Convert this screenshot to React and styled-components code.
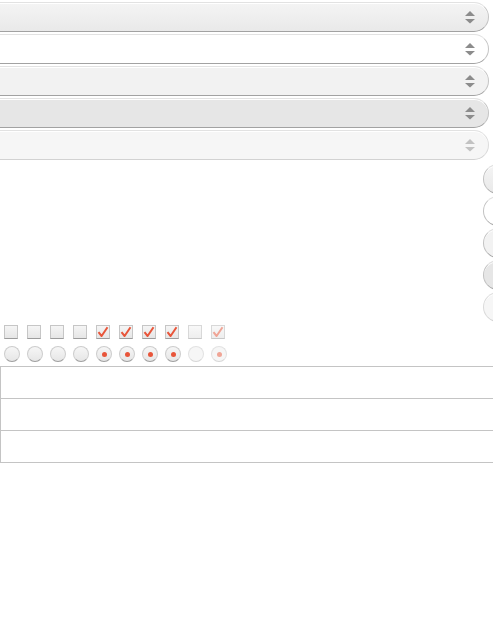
import React from "react"
import styled, { createGlobalStyle, css } from "styled-components"

const GlobalStyle = createGlobalStyle`
  html, body {
    margin: 0;
    padding: 0;
    background: #ffffff;
    overflow: hidden;
    font-family: "Liberation Sans", Arial, sans-serif;
  }
`

const fills = {
  normal: css`
    background: linear-gradient(#f4f4f4, #e9e9e9);
  `,
  focus: css`
    background: #ffffff;
  `,
  hover: css`
    background: #f2f2f2;
  `,
  active: css`
    background: #e6e6e6;
  `,
  disabled: css`
    background: #f6f6f6;
  `
}

const Page = styled.div`
  width: 493px;
  padding-top: 2px;
`

const SelectList = styled.div`
  display: flex;
  flex-direction: column;
  gap: 2px;
`

const SelectBar = styled.div`
  box-sizing: border-box;
  width: 489px;
  height: 30px;
  display: flex;
  align-items: center;
  justify-content: flex-end;
  padding-right: 13px;
  border: 1px solid #e2e2e2;
  border-left: none;
  border-bottom-color: ${(p) => (p.$state === "disabled" ? "#d2d2d2" : "#a2a2a2")};
  border-right-color: ${(p) => (p.$state === "disabled" ? "#dcdcdc" : "#c4c4c4")};
  border-radius: 0 15px 15px 0;
  box-shadow: inset 0 1px 0 #ffffff;
  ${(p) => fills[p.$state]}
`

const ButtonColumn = styled.div`
  display: flex;
  flex-direction: column;
  align-items: flex-start;
  gap: 2px;
  margin-top: 4px;
  padding-left: 483px;
`

const RoundButton = styled.div`
  box-sizing: border-box;
  width: 60px;
  height: 30px;
  border: 1px solid #e0e0e0;
  border-bottom-color: ${(p) => (p.$state === "disabled" ? "#d2d2d2" : "#a8a8a8")};
  border-left-color: ${(p) => (p.$state === "disabled" ? "#dadada" : "#c2c2c2")};
  border-radius: 15px;
  box-shadow: inset 0 1px 0 #ffffff;
  ${(p) => fills[p.$state]}
`

const ControlRow = styled.div`
  display: flex;
  align-items: center;
  padding-left: ${(p) => p.$pad}px;
  gap: ${(p) => p.$gap}px;
  height: ${(p) => p.$h}px;
`

const Box = styled.div`
  box-sizing: border-box;
  width: 14px;
  height: 14px;
  display: flex;
  align-items: center;
  justify-content: center;
  border: 1px solid ${(p) => (p.$disabled ? "#d8d8d8" : "#c6c6c6")};
  border-bottom-color: ${(p) => (p.$disabled ? "#c8c8c8" : "#9c9c9c")};
  background: ${(p) =>
    p.$disabled ? "linear-gradient(#f8f8f8, #eeeeee)" : "linear-gradient(#f5f5f5, #e6e6e6)"};
`

const Radio = styled.div`
  box-sizing: border-box;
  width: 16px;
  height: 16px;
  border-radius: 50%;
  display: flex;
  align-items: center;
  justify-content: center;
  border: 1px solid ${(p) => (p.$disabled ? "#e2e2e2" : "#cdcdcd")};
  border-bottom-color: ${(p) => (p.$disabled ? "#d6d6d6" : "#9e9e9e")};
  background: ${(p) =>
    p.$disabled ? "#f6f6f6" : "linear-gradient(#f6f6f6, #e6e6e6)"};
`

const Dot = styled.span`
  width: 5px;
  height: 5px;
  border-radius: 50%;
  background: ${(p) => (p.$disabled ? "#f0a596" : "#e8553a")};
`

const Table = styled.div`
  width: 520px;
  border-top: 1px solid #c4c4c4;
`

const TableRow = styled.div`
  height: 31px;
  border-left: 1px solid #c4c4c4;
  border-bottom: 1px solid #c4c4c4;
`

function Arrows({ disabled }) {
  const c = disabled ? "#c2c2c2" : "#8c8c8c"
  return (
    <svg width="10" height="13" viewBox="0 0 10 13">
      <path d="M5 0 L10 5 L0 5 Z" fill={c} />
      <path d="M0 8 L10 8 L5 12.5 Z" fill={c} />
    </svg>
  )
}

function Check({ disabled }) {
  return (
    <svg width="12" height="12" viewBox="0 0 12 12">
      <path
        d="M1.5 6.2 L4.6 10 L10.5 1.2"
        fill="none"
        stroke={disabled ? "#f0a596" : "#e8553a"}
        strokeWidth="2"
        strokeLinejoin="round"
      />
    </svg>
  )
}

const states = ["normal", "focus", "hover", "active", "disabled"]
const checks = [
  { on: false }, { on: false }, { on: false }, { on: false },
  { on: true }, { on: true }, { on: true }, { on: true },
  { on: false, disabled: true }, { on: true, disabled: true }
]

export default function App() {
  return (
    <Page>
      <GlobalStyle />
      <SelectList>
        {states.map((s) => (
          <SelectBar key={s} $state={s}>
            <Arrows disabled={s === "disabled"} />
          </SelectBar>
        ))}
      </SelectList>
      <ButtonColumn>
        {states.map((s) => (
          <RoundButton key={s} $state={s} />
        ))}
      </ButtonColumn>
      <ControlRow $pad={4} $gap={9} $h={20}>
        {checks.map((c, i) => (
          <Box key={i} $disabled={c.disabled}>
            {c.on && <Check disabled={c.disabled} />}
          </Box>
        ))}
      </ControlRow>
      <ControlRow $pad={4} $gap={7} $h={24}>
        {checks.map((c, i) => (
          <Radio key={i} $disabled={c.disabled}>
            {c.on && <Dot $disabled={c.disabled} />}
          </Radio>
        ))}
      </ControlRow>
      <Table>
        <TableRow />
        <TableRow />
        <TableRow />
      </Table>
    </Page>
  )
}
